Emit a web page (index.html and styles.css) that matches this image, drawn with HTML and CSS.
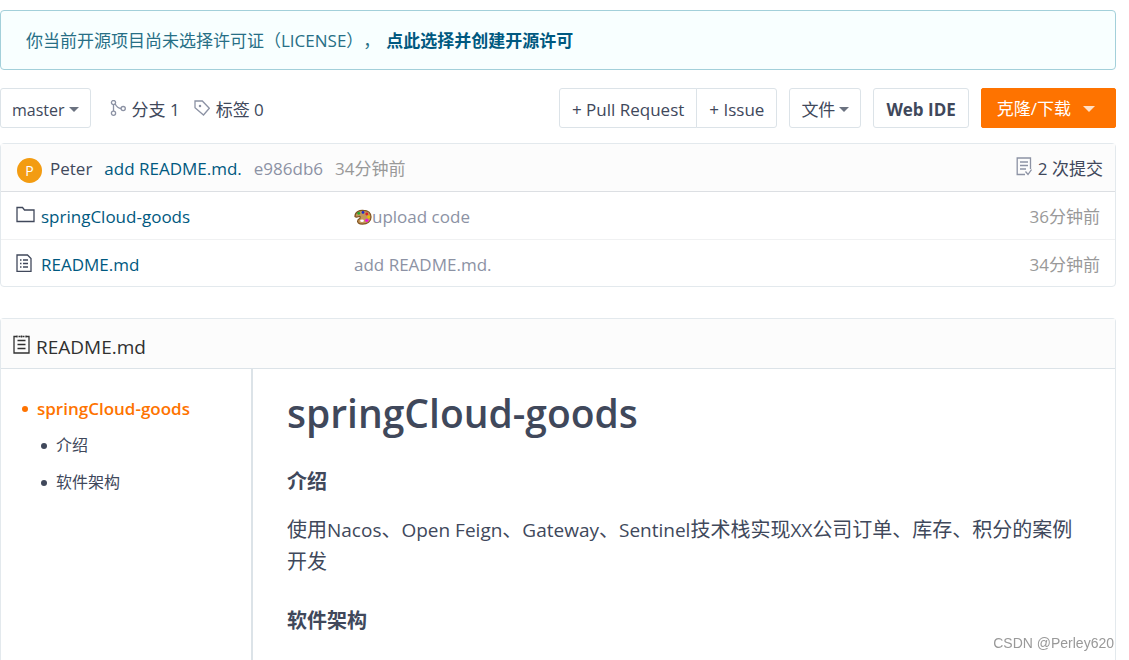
FILE: index.html
```html
<!DOCTYPE html>
<html lang="zh-CN">
<head>
<meta charset="utf-8">
<title>springCloud-goods</title>
<link rel="stylesheet" href="styles.css">
</head>
<body>
<main class="page">
  <p class="notice">你当前开源项目尚未选择许可证（LICENSE），<a class="notice-link" href="#">点此选择并创建开源许可</a></p>

  <div class="toolbar">
    <button class="btn branch" type="button">master<span class="caret"></span></button>
    <a class="stat" href="#"><svg class="stat-icon" viewBox="0 0 16 16"><circle cx="3.5" cy="2.6" r="2.1"/><circle cx="3.5" cy="13.2" r="2.1"/><circle cx="13.2" cy="8.6" r="2.1"/><path d="M3.5 4.7v6.4M5.2 4c1.6 3.200 3.200 4.300 5.900 4.500"/></svg>分支 1</a>
    <a class="stat" href="#"><svg class="stat-icon" viewBox="0 0 16 16"><path d="M1 1h7.300l7 7.300-5.800 6.700L1 7.800z"/><circle cx="6" cy="5.900" r=".6"/></svg>标签 0</a>
    <div class="actions">
      <div class="group">
        <button class="btn" type="button">+ Pull Request</button>
        <button class="btn" type="button">+ Issue</button>
      </div>
      <button class="btn files" type="button">文件<span class="caret"></span></button>
      <button class="btn ide" type="button">Web IDE</button>
      <button class="btn clone" type="button">克隆/下载<span class="caret"></span></button>
    </div>
  </div>

  <section class="panel">
    <header class="commit">
      <span class="avatar">P</span>
      <a class="author" href="#">Peter</a>
      <a class="link" href="#">add README.md.</a>
      <a class="muted" href="#">e986db6</a>
      <span class="time">34分钟前</span>
      <a class="commits" href="#"><svg class="commits-icon" viewBox="0 0 16 19"><path d="M9 17.500H1.200V1h13.300v11M4 5h8M4 8.500h8M4 12h6M9.500 14.500l2.500 3 3.500-5"/></svg>2 次提交</a>
    </header>
    <table class="tree">
      <tr>
        <td class="name"><a class="link" href="#"><svg class="file-icon" viewBox="0 0 19 18"><path d="M1 15.500V1.500h5.500l2 2.500H18v11.500z"/></svg>springCloud-goods</a></td>
        <td class="message"><a class="muted" href="#"><svg class="palette" viewBox="0 0 19 18"><path fill="#c4975a" stroke="#805321" d="M1 8C1 3 6 1 10 1.500c5 0 8 3 8 7 0 5-4 7.500-9 7.500-4 0-6-2-5-4 .7-1.500 3-1.500 2.500-3.500C6 6.500 3 10 1 8z"/><g stroke="none"><ellipse cx="8.500" cy="12.500" rx="2" ry="1.300" fill="#fff"/><circle cx="5" cy="4.600" r="1.500" fill="#22a930"/><circle cx="9.500" cy="3.600" r="1.500" fill="#1d2bcb"/><circle cx="13.500" cy="5.300" r="1.500" fill="#df1d25"/><circle cx="15.500" cy="8.500" r="1.500" fill="#f1bd00"/><circle cx="13.500" cy="12" r="1.700" fill="#f112d7"/></g></svg>upload code</a></td>
        <td class="time age">36分钟前</td>
      </tr>
      <tr>
        <td class="name"><a class="link" href="#"><svg class="file-icon" viewBox="0 0 19 18"><path d="M1 1h10.500L15 4.500V17.500H1zM7 6h5M7 9.500h5M7 13h5M4 6h1.500M4 9.500h1.500M4 13h1.500"/></svg>README.md</a></td>
        <td class="message"><a class="muted" href="#">add README.md.</a></td>
        <td class="time age">34分钟前</td>
      </tr>
    </table>
  </section>

  <section class="panel readme">
    <header class="readme-head"><svg class="readme-icon" viewBox="0 0 17 19"><path d="M3.500 1.500H1v16.500h15V1.500h-2.500M5.500 1.500h2M9.500 1.500h2M4.500 5.500h8M4.500 9.500h8M4.500 13.500h8M4 .5v2M8.500.5v2M13 .5v2"/></svg>README.md</header>
    <div class="readme-body">
      <nav class="toc">
        <ul class="toc-list">
          <li><a class="toc-current" href="#goods">springCloud-goods</a>
            <ul class="toc-sub">
              <li><a href="#intro">介绍</a></li>
              <li><a href="#arch">软件架构</a></li>
            </ul>
          </li>
        </ul>
      </nav>
      <article class="doc">
        <h1 id="goods">springCloud-goods</h1>
        <h2 id="intro">介绍</h2>
        <p>使用<span class="latin">Nacos</span>、<span class="latin">Open Feign</span>、<span class="latin">Gateway</span>、<span class="latin">Sentinel</span>技术栈实现<span class="latin">XX</span>公司订单、库存、积分的案例开发</p>
        <h2 id="arch">软件架构</h2>
      </article>
    </div>
  </section>
</main>
<div class="watermark">CSDN @Perley620</div>
</body>
</html>
```
FILE: styles.css
```css
* { box-sizing: border-box; }
body {
  margin: 0;
  background: #fff;
  color: #40485b;
  font: 17px/24px "Open Sans", "Noto Sans CJK SC", sans-serif;
  text-spacing-trim: space-all;
}
a { color: inherit; text-decoration: none; }
svg { fill: none; stroke: currentColor; stroke-width: 1.3; flex: none; }
.page {
  display: flex;
  flex-direction: column;
  min-height: 100vh;
  padding: 10px 13px 0 0;
}
.notice {
  margin: 0 0 18px;
  padding: 18px 25px 16px;
  border: 1px solid #a3d0da;
  border-radius: 4px;
  background: #f8ffff;
  color: #276f86;
}
.notice-link { margin-left: 6px; color: #005980; font-weight: 700; }
.toolbar { display: flex; align-items: center; margin-bottom: 15px; }
.btn {
  display: flex;
  align-items: center;
  justify-content: center;
  height: 40px;
  padding: 3px 11px 0;
  border: 1px solid #dce3e8;
  border-radius: 3px;
  background: #fff;
  color: #40485b;
  font: inherit;
  white-space: nowrap;
}
.caret {
  margin-left: 4px;
  border: 5px solid transparent;
  border-top-color: #6b7280;
  border-bottom: 0;
}
.branch { margin-right: 19px; font-size: 16px; }
.stat { display: flex; align-items: center; margin-right: 14px; padding-top: 3px; }
.stat-icon { width: 16px; height: 16px; margin: 0 6px 4px 0; color: #8c92a4; }
.actions { display: flex; gap: 12px; margin-left: auto; }
.group { display: flex; }
.group .btn { padding: 3px 12px 0; }
.group .btn:first-child { border-radius: 3px 0 0 3px; }
.group .btn:last-child { margin-left: -1px; border-radius: 0 3px 3px 0; }
.ide { padding: 3px 12px 0; font-weight: 700; }
.clone { padding: 2px 20px 0 15px; border-color: #fe7300; border-radius: 2px; background: #fe7300; color: #fff; }
.clone .caret { margin-left: 12px; border-width: 6px 6px 0; border-top-color: #ffe0c6; }
.panel { border: 1px solid #e3e9ed; border-radius: 4px; }
.commit {
  display: flex;
  align-items: center;
  gap: 12px;
  height: 48px;
  padding: 2px 12px 0 16px;
  border-bottom: 1px solid #dcdfe3;
  background: #fcfcfc;
}
.avatar {
  width: 25px;
  margin: 3px -4px 0 0;
  border-radius: 50%;
  background: #f39c12;
  color: #fff;
  font-size: 14px;
  line-height: 25px;
  text-align: center;
}
.link { color: #005980; }
.muted { color: #8c92a4; }
.time { color: #999; }
.commits { display: flex; align-items: center; gap: 6px; margin-left: auto; }
.commits-icon { width: 16px; height: 19px; margin-bottom: 4px; color: #8c92a4; }
.tree { width: 100%; border-collapse: collapse; table-layout: fixed; }
.tree td { height: 47px; padding: 4px 0 0; }
.tree tr + tr td { border-top: 1px solid #f0f1f2; }
.tree .name { width: 353px; padding-left: 15px; }
.tree .age { width: 160px; padding-right: 15px; text-align: right; }
.tree a { display: flex; align-items: center; }
.file-icon { width: 19px; height: 18px; margin: 0 6px 4px 0; color: #40485b; }
.palette { width: 18px; height: 17px; }
.readme {
  display: flex;
  flex: 1;
  flex-direction: column;
  margin-top: 31px;
  border-bottom: 0;
  border-radius: 4px 4px 0 0;
}
.readme-head {
  display: flex;
  align-items: center;
  gap: 6px;
  height: 50px;
  padding: 6px 12px 0;
  border-bottom: 1px solid #dce3e8;
  background: #fcfcfc;
  color: #303030;
  font-size: 19px;
}
.readme-icon { width: 17px; height: 19px; margin-bottom: 5px; }
.readme-body { display: flex; flex: 1; }
.toc { flex: none; width: 252px; padding: 21px 18px; border-right: 2px solid #dce3e8; font-size: 16px; line-height: 37px; }
.toc ul { margin: 0; padding: 0; list-style: none; }
.toc a { display: flex; align-items: center; gap: 9px; }
.toc a::before { width: 6px; height: 6px; border-radius: 50%; background: currentColor; content: ""; }
.toc .toc-current { padding-left: 3px; color: #fe7300; font-size: 17px; font-weight: 600; }
.toc .toc-sub { padding-left: 22px; }
.doc { flex: 1; padding: 16px 34px 0 34px; font-size: 20px; line-height: 32px; }
.doc h1 { margin: 0 0 25px; font-size: 39px; font-weight: 600; line-height: 56px; }
.doc h2 { margin: 0 0 16px; font-size: 20px; font-weight: 700; line-height: 32px; }
.doc p { margin: 0 0 27px; }
.latin { font-size: 19px; }
.watermark {
  position: fixed;
  right: 15px;
  bottom: 8px;
  color: #999;
  font: 14px/18px "Liberation Sans", sans-serif;
}
```
